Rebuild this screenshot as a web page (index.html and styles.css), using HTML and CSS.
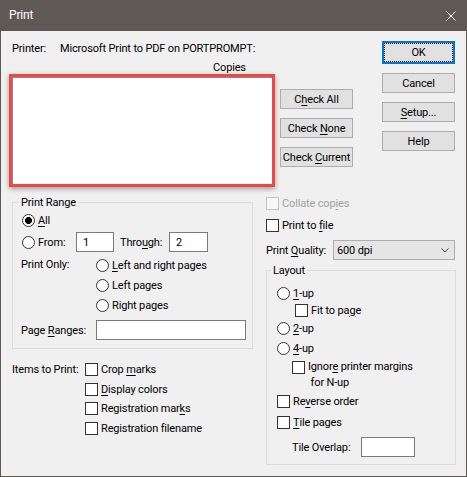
FILE: index.html
```html
<!DOCTYPE html>
<html>
<head>
<meta charset="utf-8">
<link rel="stylesheet" href="styles.css">
</head>
<body>
<div class="window">
  <div class="titlebar">
    <span class="title">Print</span>
    <svg class="close" width="10" height="10" viewBox="0 0 10 10"><path d="M0.5 0.5 L9.5 9.5 M9.5 0.5 L0.5 9.5" stroke="#fff" stroke-width="1" fill="none"/></svg>
  </div>
  <div class="top">
    <div class="top-main">
      <div class="printer-row"><span class="printer-label">Printer:</span><span>Microsoft Print to PDF on PORTPROMPT:</span></div>
      <div class="copies">Copies</div>
      <div class="list-row">
        <div class="listbox"></div>
        <div class="check-buttons">
          <button class="btn"><span>C<u>h</u>eck All</span></button>
          <button class="btn"><span>Check <u>N</u>one</span></button>
          <button class="btn"><span>Check <u>C</u>urrent</span></button>
        </div>
      </div>
    </div>
    <div class="side">
      <button class="btn btn-default"><span>OK</span></button>
      <button class="btn"><span>Cancel</span></button>
      <button class="btn"><span><u>S</u>etup...</span></button>
      <button class="btn"><span>Help</span></button>
    </div>
  </div>
  <div class="bottom">
    <div class="left-col">
      <fieldset class="group range">
        <legend>Print Range</legend>
        <div class="row r-all"><span class="radio checked"></span><span><u>A</u>ll</span></div>
        <div class="row r-from">
          <span class="radio"></span><span class="from-label">From:</span>
          <span class="field f-from">1</span>
          <span class="through-label">Thro<u>u</u>gh:</span>
          <span class="field f-through">2</span>
        </div>
        <div class="print-only">
          <span class="po-label">Print Only:</span>
          <div class="po-options">
            <div class="row"><span class="radio"></span><span><u>L</u>eft and right pages</span></div>
            <div class="row"><span class="radio"></span><span>Left pages</span></div>
            <div class="row"><span class="radio"></span><span>Right pages</span></div>
          </div>
        </div>
        <div class="row r-ranges">
          <span class="ranges-label">Page <u>R</u>anges:</span>
          <span class="field f-ranges"></span>
        </div>
      </fieldset>
      <div class="items">
        <span class="items-label">Items to Print:</span>
        <div class="items-options">
          <div class="row"><span class="cb"></span><span>Crop <u>m</u>arks</span></div>
          <div class="row"><span class="cb"></span><span><u>D</u>isplay colors</span></div>
          <div class="row"><span class="cb"></span><span>Registration mar<u>k</u>s</span></div>
          <div class="row"><span class="cb"></span><span>Registration filename</span></div>
        </div>
      </div>
    </div>
    <div class="right-col">
      <div class="row r-collate disabled"><span class="cb"></span><span>Collate cop<u>i</u>es</span></div>
      <div class="row r-file"><span class="cb"></span><span>Print to <u>f</u>ile</span></div>
      <div class="row r-quality">
        <span class="quality-label">Print <u>Q</u>uality:</span>
        <div class="select"><span>600 dpi</span><svg width="8" height="5" viewBox="0 0 8 5"><path d="M0.5 0.5 L4 4 L7.5 0.5" stroke="#444" stroke-width="1" fill="none"/></svg></div>
      </div>
      <fieldset class="group layout">
        <legend>Layout</legend>
        <div class="lrow l-1up"><span class="radio"></span><span><u>1</u>-up</span></div>
        <div class="lrow l-fit"><span class="cb"></span><span>Fit to pa<u>g</u>e</span></div>
        <div class="lrow l-2up"><span class="radio"></span><span><u>2</u>-up</span></div>
        <div class="lrow l-4up"><span class="radio"></span><span><u>4</u>-up</span></div>
        <div class="l-ignore"><span class="cb"></span><span class="ignore-text">Ignor<u>e</u> printer margins<br>&nbsp;for N-up</span></div>
        <div class="lrow l-reverse"><span class="cb"></span><span>Re<u>v</u>erse order</span></div>
        <div class="lrow l-tile"><span class="cb"></span><span><u>T</u>ile pages</span></div>
        <div class="row l-overlap"><span class="overlap-label">Tile Overlap:</span><span class="field f-overlap"></span></div>
      </fieldset>
    </div>
  </div>
</div>
</body>
</html>
```

FILE: styles.css
```css
body {
  margin: 0;
  font-family: Roboto, "Noto Sans", sans-serif;
  font-size: 11px;
  letter-spacing: -0.15px;
  color: #000;
}
u { text-decoration-thickness: 1px; text-underline-offset: 2px; }
.window {
  width: 467px;
  height: 477px;
  box-sizing: border-box;
  border: 1px solid #5e5955;
  border-top: 0;
  background: #f0f0f0;
  overflow: hidden;
}
.titlebar {
  height: 31px;
  background: #5e5955;
  color: #fff;
  display: flex;
  align-items: center;
  justify-content: space-between;
  padding: 0 10px 0 8px;
}
.title { line-height: 15px; font-size: 12px; }
.close { display: block; }

.top { display: flex; align-items: flex-start; }
.top-main { padding-left: 8px; }
.printer-row { margin-top: 10px; height: 15px; line-height: 15px; padding-left: 3px; display: flex; white-space: nowrap; }
.printer-label { width: 48px; flex: none; }
.copies { margin-top: 6px; height: 12px; line-height: 12px; padding-left: 204px; }
.list-row { display: flex; align-items: flex-start; }
.listbox {
  width: 266px;
  height: 113px;
  flex: none;
  box-sizing: border-box;
  border: 3px solid #f04646;
  background: #fff;
  box-shadow: inset 1px 1px 0 #8c8c8c, 0 2px 5px rgba(0,0,0,0.35);
}
.check-buttons { margin-left: 5px; margin-top: 15px; display: flex; flex-direction: column; gap: 9px; }
.btn {
  width: 73px;
  height: 20px;
  box-sizing: border-box;
  border: 1px solid #adadad;
  background: #e1e1e1;
  font: inherit;
  letter-spacing: inherit;
  color: #000;
  padding: 0;
  display: flex;
  align-items: center;
  justify-content: center;
  white-space: nowrap;
}
.side { margin-left: auto; margin-right: 11px; margin-top: 10px; display: flex; flex-direction: column; gap: 9px; }
.btn-default { height: 23px; border: 2px solid #0078d7; position: relative; }
.btn-default::after { content: ""; position: absolute; inset: 0; border: 1px dotted #000; }

.bottom { display: flex; padding-left: 11px; padding-top: 1px; gap: 13px; }
.left-col { width: 241px; flex: none; }
.right-col { width: 190px; flex: none; }

.group { margin: 0; border: 1px solid #dcdcdc; min-width: 0; box-sizing: border-box; }
.group legend { padding: 0 2px; line-height: 15px; height: 15px; }
.row { display: flex; align-items: center; height: 20px; white-space: nowrap; }
.lrow { display: flex; align-items: center; height: 16px; white-space: nowrap; }
.row > *, .lrow > * { flex: none; }

.radio {
  width: 13px; height: 13px; box-sizing: border-box;
  border: 1px solid #333; border-radius: 50%; background: #fff;
  margin-right: 3px; flex: none;
}
.radio.checked { background: radial-gradient(circle, #000 0 3.2px, #fff 3.8px); }
.cb {
  width: 13px; height: 13px; box-sizing: border-box;
  border: 1px solid #333; background: #fff;
  margin-right: 3px; flex: none;
}
.field {
  box-sizing: border-box; height: 20px;
  border: 1px solid #7a7a7a; background: #fff;
  padding-left: 6px; display: flex; align-items: center;
}

.range { width: 241px; margin-top: 7px; padding: 0 0 8px 6px; }
.r-all { margin-left: 3px; }
.r-from { margin-left: 3px; margin-top: 2px; }
.from-label { width: 38px; }
.f-from { width: 38px; }
.through-label { margin-left: 6px; width: 49px; }
.f-through { width: 39px; }
.print-only { display: flex; margin-top: 3px; }
.po-label { margin-left: 2px; width: 75px; line-height: 20px; flex: none; }
.r-ranges { margin-top: 5px; margin-left: 2px; }
.ranges-label { width: 75px; }
.f-ranges { width: 150px; }

.items { display: flex; margin-top: 11px; }
.items-label { width: 73px; line-height: 20px; white-space: nowrap; flex: none; }
.items-options .row { height: 19.5px; }

.r-collate { margin-top: 5px; }
.disabled { color: #a0a0a0; }
.disabled .cb { border-color: #c5c5c5; background: #f7f7f7; }
.r-file { margin-top: 2px; }
.r-quality { margin-top: 5px; }
.quality-label { width: 67px; }
.select {
  width: 122px; height: 20px; box-sizing: border-box;
  border: 1px solid #adadad; background: #e5e5e5;
  display: flex; align-items: center; justify-content: space-between;
  padding: 0 5px 0 3px;
}
.select svg { display: block; }

.layout { width: 190px; margin-top: 3px; padding: 0 0 7px 4px; }
.l-1up { margin-top: 7px; margin-left: 6px; }
.l-fit { margin-top: 1px; margin-left: 24px; }
.l-2up { margin-top: 2px; margin-left: 6px; }
.l-4up { margin-top: 4px; margin-left: 6px; }
.l-ignore { margin-top: 3px; margin-left: 21px; display: flex; align-items: flex-start; }
.l-ignore .cb { margin-top: 2px; }
.ignore-text { line-height: 16px; white-space: nowrap; }
.l-reverse { margin-top: 2px; margin-left: 6px; }
.l-tile { margin-top: 5px; margin-left: 6px; }
.l-overlap { margin-top: 7px; margin-left: 21px; }
.overlap-label { width: 69px; }
.f-overlap { width: 54px; }
```
